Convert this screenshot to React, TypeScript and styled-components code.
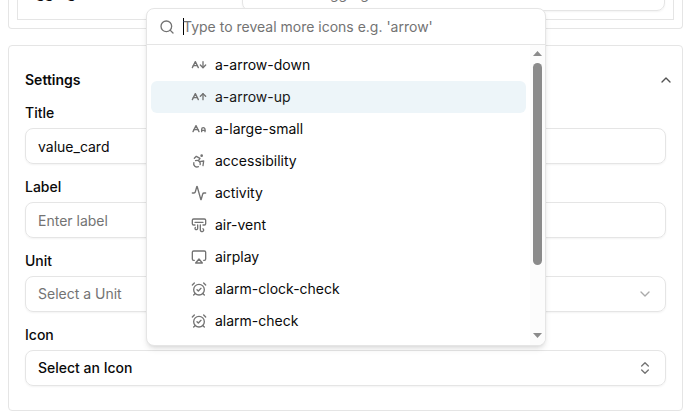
import React from "react";
import styled, { createGlobalStyle } from "styled-components";
import {
  Accessibility,
  Activity,
  AirVent,
  Airplay,
  AlarmClockCheck,
  ChevronDown,
  ChevronUp,
  ChevronsUpDown,
  Search,
} from "lucide-react";

const Global = createGlobalStyle`
  *, *::before, *::after { box-sizing: border-box; }
  html, body { margin: 0; height: 420px; overflow: hidden; background: #fff; }
  body { font: 14px/20px Inter, "Liberation Sans", sans-serif; color: #0a0a0a; }
`;

const line = "#e5e5e5";

const Page = styled.main`
  position: relative;
  width: 690px;
  height: 420px;
  padding: 0 7px 0 8px;
  overflow: hidden;
`;

const UpperCard = styled.section`
  height: 29px;
  margin-bottom: 16px;
  padding: 0 8px 8px;
  border: 1px solid ${line};
  border-top: 0;
  border-radius: 0 0 4px 4px;
`;

const UpperRow = styled.div`
  display: flex;
  justify-content: space-between;
  height: 20px;
  padding: 0 8px 8px;
  border: 1px solid ${line};
  border-top: 0;
`;

const UpperLabel = styled.span`
  height: 12px;
  margin-top: -17px;
  font-weight: 600;
  line-height: 20px;
`;

const UpperSelect = styled.div`
  width: 423px;
  height: 37px;
  margin-top: -26px;
  padding: 9px 12px 7px;
  border: 1px solid ${line};
  border-radius: 8px;
  box-shadow: 0 1px 2px rgba(0, 0, 0, 0.05);
  color: #737373;
`;

const Card = styled.section`
  height: 366px;
  padding: 24px 16px;
  border: 1px solid ${line};
  border-radius: 4px;
`;

const CardHeader = styled.header`
  display: flex;
  align-items: center;
  justify-content: space-between;
  height: 20px;
  margin-bottom: 13px;

  h2 {
    margin: 0;
    font-size: 14px;
    font-weight: 600;
  }
  svg { margin-right: -8px; }
`;

const Field = styled.div`
  height: 74px;
`;

const Label = styled.div`
  height: 20px;
  margin-bottom: 5px;
  font-weight: 500;
`;

const Control = styled.div<{ $muted?: boolean; $strong?: boolean; $input?: boolean }>`
  display: flex;
  align-items: center;
  justify-content: space-between;
  height: 36px;
  padding: ${(p) => (p.$input ? "2px 12px 0" : "0 12px")};
  border: 1px solid ${line};
  border-radius: 8px;
  box-shadow: 0 1px 2px rgba(0, 0, 0, 0.05);
  color: ${(p) => (p.$muted ? "#737373" : "#0a0a0a")};
  font-weight: ${(p) => (p.$strong ? 500 : 400)};
`;

const Popover = styled.div`
  position: absolute;
  left: 146px;
  top: 8px;
  width: 400px;
  height: 338px;
  overflow: hidden;
  border: 1px solid ${line};
  border-radius: 8px;
  background: #fff;
  box-shadow: 0 4px 6px -1px rgba(0, 0, 0, 0.1), 0 2px 4px -2px rgba(0, 0, 0, 0.1);
`;

const SearchBar = styled.div`
  display: flex;
  align-items: center;
  gap: 8px;
  height: 36px;
  padding: 0 12px;
  border-bottom: 1px solid ${line};
  color: #737373;
`;

const Caret = styled.i`
  width: 1px;
  height: 17px;
  margin-right: -9px;
  background: #000;
`;

const ListArea = styled.div`
  display: flex;
  height: 300px;
`;

const Options = styled.div`
  flex: 1;
  padding: 4px;
`;

const Option = styled.div<{ $active?: boolean }>`
  display: flex;
  align-items: center;
  gap: 8px;
  height: 32px;
  padding-left: 40px;
  border-radius: 6px;
  background: ${(p) => (p.$active ? "#edf5f9" : "transparent")};
  color: ${(p) => (p.$active ? "#171717" : "#0a0a0a")};

  svg { color: #737373; }
`;

const Scrollbar = styled.div`
  display: flex;
  flex-direction: column;
  align-items: center;
  justify-content: space-between;
  width: 15px;
  padding: 6px 0 7px;
  background: #fcfcfc;

  svg { display: block; }
`;

const Thumb = styled.div`
  width: 9px;
  height: 202px;
  margin: 7px 0 auto;
  border-radius: 5px;
  background: #8b8b8b;
`;

const Glyph = ({ paths }: { paths: string[] }) => (
  <svg width="16" height="16" viewBox="0 0 24 24" fill="none" stroke="currentColor" strokeWidth="2" strokeLinecap="round" strokeLinejoin="round">
    {paths.map((d) => <path key={d} d={d} />)}
  </svg>
);

const options = [
  { name: "a-arrow-down", icon: <Glyph paths={["M3.5 13h6", "m2 16 4.5-9 4.5 9", "M18 7v9", "m14 12 4 4 4-4"]} /> },
  { name: "a-arrow-up", icon: <Glyph paths={["M3.5 13h6", "m2 16 4.5-9 4.5 9", "M18 16V7", "m14 11 4-4 4 4"]} /> },
  { name: "a-large-small", icon: <Glyph paths={["M21 14h-5", "M16 16v-3.5a2.5 2.5 0 0 1 5 0V16", "M4.5 13h6", "m3 16 4.5-9 4.5 9"]} /> },
  { name: "accessibility", icon: <Accessibility size={16} /> },
  { name: "activity", icon: <Activity size={16} /> },
  { name: "air-vent", icon: <AirVent size={16} /> },
  { name: "airplay", icon: <Airplay size={16} /> },
  { name: "alarm-clock-check", icon: <AlarmClockCheck size={16} /> },
  { name: "alarm-check", icon: <AlarmClockCheck size={16} /> },
];

export default function App() {
  return (
    <>
      <Global />
      <Page>
        <UpperCard>
          <UpperRow>
            <UpperLabel>Aggregation</UpperLabel>
            <UpperSelect>Select an Aggregation</UpperSelect>
          </UpperRow>
        </UpperCard>
        <Card>
          <CardHeader>
            <h2>Settings</h2>
            <ChevronUp size={16} color="#525252" />
          </CardHeader>
          <Field>
            <Label>Title</Label>
            <Control $input>value_card</Control>
          </Field>
          <Field>
            <Label>Label</Label>
            <Control $input $muted>Enter label</Control>
          </Field>
          <Field>
            <Label>Unit</Label>
            <Control $muted>
              Select a Unit
              <ChevronDown size={16} opacity={0.6} />
            </Control>
          </Field>
          <Field>
            <Label>Icon</Label>
            <Control $strong>
              Select an Icon
              <ChevronsUpDown size={16} color="#737373" />
            </Control>
          </Field>
        </Card>
        <Popover>
          <SearchBar>
            <Search size={16} />
            <Caret />
            Type to reveal more icons e.g. 'arrow'
          </SearchBar>
          <ListArea>
            <Options>
              {options.map((o) => (
                <Option key={o.name} $active={o.name === "a-arrow-up"}>
                  {o.icon}
                  {o.name}
                </Option>
              ))}
            </Options>
            <Scrollbar>
              <svg width="9" height="5" viewBox="0 0 9 5"><path d="M4.5 0 9 5H0z" fill="#8b8b8b" /></svg>
              <Thumb />
              <svg width="9" height="5" viewBox="0 0 9 5"><path d="M0 0h9L4.5 5z" fill="#8b8b8b" /></svg>
            </Scrollbar>
          </ListArea>
        </Popover>
      </Page>
    </>
  );
}
